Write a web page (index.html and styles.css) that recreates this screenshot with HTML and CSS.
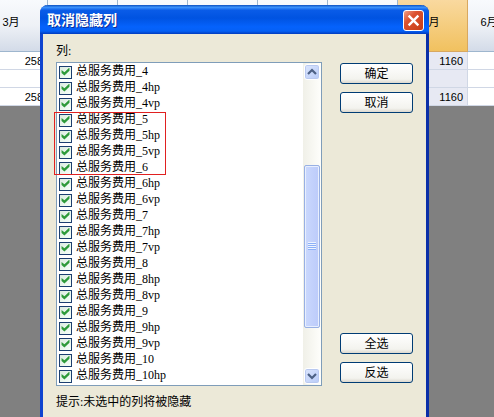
FILE: index.html
```html
<!DOCTYPE html>
<html lang="zh-CN">
<head>
    <meta charset="UTF-8">
    <meta name="viewport" content="width=device-width, initial-scale=1.0">
    <title>取消隐藏列</title>
    <link rel="stylesheet" href="styles.css">
</head>
<body>

    <!-- Spreadsheet behind the dialog -->
    <table class="sheet">
        <thead>
            <tr><th>3月</th><th></th><th></th><th></th><th></th><th></th><th class="current">5月</th><th class="last">6月</th></tr>
        </thead>
        <tbody>
            <tr><td>258</td><td></td><td></td><td></td><td></td><td></td><td class="current">1160</td><td></td></tr>
            <tr><td></td><td></td><td></td><td></td><td></td><td></td><td class="current"></td><td></td></tr>
            <tr><td>258</td><td></td><td></td><td></td><td></td><td></td><td class="current">1160</td><td></td></tr>
        </tbody>
    </table>

    <!-- Dialog -->
    <div class="dialog" role="dialog" aria-labelledby="dialog-title">
        <div class="title-bar">
            <h1 id="dialog-title">取消隐藏列</h1>
            <button class="close" aria-label="关闭">
                <svg width="13" height="13" viewBox="0 0 12 12"><path d="M1.5 1.5l9 9M10.5 1.5l-9 9" stroke="#fff" stroke-width="2.2" fill="none"/></svg>
            </button>
        </div>

        <div class="content">
            <div class="left">
                <p class="label" id="list-label">列:</p>
                <div class="list-box" role="group" aria-labelledby="list-label">
                    <div class="items">
                        <label><input type="checkbox" checked>总服务费用_4</label>
                        <label><input type="checkbox" checked>总服务费用_4hp</label>
                        <label><input type="checkbox" checked>总服务费用_4vp</label>
                        <label><input type="checkbox" checked>总服务费用_5</label>
                        <label><input type="checkbox" checked>总服务费用_5hp</label>
                        <label><input type="checkbox" checked>总服务费用_5vp</label>
                        <label><input type="checkbox" checked>总服务费用_6</label>
                        <label><input type="checkbox" checked>总服务费用_6hp</label>
                        <label><input type="checkbox" checked>总服务费用_6vp</label>
                        <label><input type="checkbox" checked>总服务费用_7</label>
                        <label><input type="checkbox" checked>总服务费用_7hp</label>
                        <label><input type="checkbox" checked>总服务费用_7vp</label>
                        <label><input type="checkbox" checked>总服务费用_8</label>
                        <label><input type="checkbox" checked>总服务费用_8hp</label>
                        <label><input type="checkbox" checked>总服务费用_8vp</label>
                        <label><input type="checkbox" checked>总服务费用_9</label>
                        <label><input type="checkbox" checked>总服务费用_9hp</label>
                        <label><input type="checkbox" checked>总服务费用_9vp</label>
                        <label><input type="checkbox" checked>总服务费用_10</label>
                        <label><input type="checkbox" checked>总服务费用_10hp</label>
                    </div>
                    <div class="scrollbar">
                        <button class="arrow" aria-label="向上">
                            <svg width="10" height="8" viewBox="0 0 10 8"><path d="M1 6l4-4 4 4" stroke="#4d6185" stroke-width="2.2" fill="none"/></svg>
                        </button>
                        <div class="track-above"></div>
                        <div class="thumb"><span class="grip"></span></div>
                        <div class="track-below"></div>
                        <button class="arrow" aria-label="向下">
                            <svg width="10" height="8" viewBox="0 0 10 8"><path d="M1 2l4 4 4-4" stroke="#4d6185" stroke-width="2.2" fill="none"/></svg>
                        </button>
                    </div>
                    <!-- Red highlight over rows 5 to 6 -->
                    <div class="highlight"></div>
                </div>
                <p class="hint">提示:未选中的列将被隐藏</p>
            </div>

            <div class="buttons">
                <button class="button">确定</button>
                <button class="button">取消</button>
                <button class="button select-all">全选</button>
                <button class="button">反选</button>
            </div>
        </div>
    </div>

</body>
</html>
```

FILE: styles.css
```css
* {
    box-sizing: border-box;
}

body {
    margin: 0;
    height: 100vh;
    position: relative;
    overflow: hidden;
    background-color: #808080;
    color: #000;
    font-family: "Liberation Serif", "Noto Sans CJK SC", serif;
    font-size: 12px;
    line-height: 16px;
}

h1, p {
    margin: 0;
}

button {
    font-family: inherit;
    font-size: 12px;
    line-height: 16px;
    color: #000;
    padding: 0;
}

/* Spreadsheet, scrolled a little to the right */
.sheet {
    table-layout: fixed;
    width: 536px;
    margin-left: -22px;
    border-collapse: separate;
    border-spacing: 0;
    font-family: "Liberation Sans", "Noto Sans CJK SC", sans-serif;
    font-size: 11px;
}

.sheet th {
    height: 52px;
    padding: 8px 3px 16px 0;
    line-height: 16px;
    font-weight: normal;
    text-align: center;
    background: linear-gradient(#f8fafd, #eef1f6 50%, #d3dbe8);
    border-right: 1px solid #9eb6ce;
    border-bottom: 1px solid #9eb6ce;
}

.sheet .last {
    width: 46px;
}

.sheet th.current {
    background: linear-gradient(#f9d99f, #f1c15f);
    border-color: #d8a860;
}

.sheet td {
    height: 18px;
    padding: 0 4px 0 0;
    text-align: right;
    background-color: #fff;
    border-right: 1px solid #d0d7e5;
    border-bottom: 1px solid #d0d7e5;
}

.sheet td.current {
    background-color: #e7e9f3;
}

/* Dialog window */
.dialog {
    position: absolute;
    top: 5px;
    left: 40px;
    right: 65px;
    bottom: -10px;
    display: flex;
    flex-direction: column;
    border-radius: 8px 8px 0 0;
    border: 3px solid #0f44cf;
    border-top: none;
    border-right-color: #0a2fa8;
    background-color: #ece9d8;
}

.title-bar {
    display: flex;
    align-items: center;
    justify-content: space-between;
    height: 29px;
    margin: 0 -3px;
    padding: 2px 5px 0 7px;
    border-radius: 8px 8px 0 0;
    background: linear-gradient(#0a50c0, #3c92fb 8%, #0a5ce8 18%, #0053e1 45%, #0562fc 75%, #0560f5 90%, #023bbd);
}

.title-bar h1 {
    color: #fff;
    font-size: 14px;
    line-height: 20px;
    font-weight: bold;
    text-shadow: 1px 1px #0a2f9c;
}

.close {
    display: flex;
    align-items: center;
    justify-content: center;
    width: 21px;
    height: 21px;
    border: 1px solid #fff;
    border-radius: 3px;
    background: linear-gradient(135deg, #f0a088, #dc5331 35%, #c73b14);
}

.content {
    display: flex;
    justify-content: space-between;
    padding: 9px 13px 0;
}

.left {
    flex: 1;
}

.label {
    padding-bottom: 3px;
}

/* Column list */
.list-box {
    position: relative;
    display: flex;
    height: 324px;
    border: 1px solid #7f9db9;
    background-color: #fff;
}

.items {
    flex: 1;
}

.items label {
    display: flex;
    align-items: center;
    gap: 4px;
    height: 16px;
    padding-left: 2px;
}

.items input {
    appearance: none;
    flex: none;
    width: 13px;
    height: 13px;
    margin: 2px 0 0;
    border: 1px solid #1c3f70;
    background: linear-gradient(135deg, #dcebe0, #f6fff8);
}

.items input:checked::before {
    content: "";
    display: block;
    width: 9px;
    height: 8px;
    margin: 1px;
    background-color: #2e9a3a;
    clip-path: polygon(6% 30%, 38% 60%, 94% 0, 94% 40%, 38% 100%, 6% 70%);
}

/* Scrollbar */
.scrollbar {
    display: flex;
    flex-direction: column;
    width: 18px;
    padding: 1px;
    background: linear-gradient(90deg, #f0f0e8, #fefefb);
}

.arrow {
    display: flex;
    align-items: center;
    justify-content: center;
    width: 16px;
    height: 16px;
    border: 1px solid #fff;
    border-radius: 3px;
    background: linear-gradient(135deg, #dce6fd, #b8cbf8);
    box-shadow: inset 0 0 0 1px #b9c9f0;
}

.track-above {
    flex: 21;
}

.track-below {
    flex: 10;
}

.thumb {
    display: flex;
    align-items: center;
    justify-content: center;
    height: 163px;
    border: 1px solid #98b0e4;
    border-radius: 2px;
    background: linear-gradient(90deg, #cad8fd, #bccbfa);
    box-shadow: inset 0 0 0 1px #e8effe;
}

.grip {
    width: 8px;
    height: 8px;
    background: repeating-linear-gradient(#eef4fe 0 1px, #8cb0f8 1px 2px);
}

.highlight {
    position: absolute;
    top: 49px;
    left: -3px;
    width: 112px;
    height: 63px;
    border: 1px solid #e02020;
    pointer-events: none;
}

.hint {
    padding-top: 8px;
}

/* Buttons on the right */
.buttons {
    display: flex;
    flex-direction: column;
    gap: 8px;
    height: 340px;
    margin-left: 18px;
    padding-top: 20px;
}

.button {
    width: 73px;
    height: 21px;
    border: 1px solid #003c74;
    border-radius: 3px;
    background: linear-gradient(#fff, #f3f3ee 80%, #dcd8cf);
}

.select-all {
    margin-top: auto;
}
```
